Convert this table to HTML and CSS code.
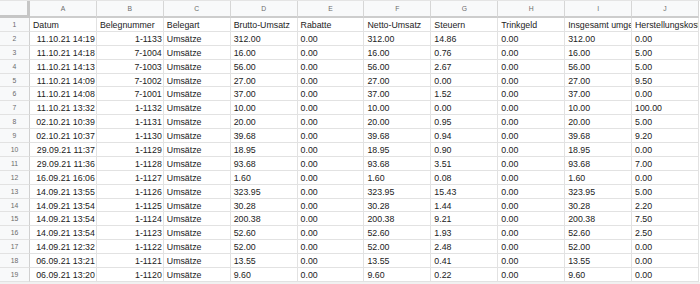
FILE: index.html
```html
<!DOCTYPE html>
<html lang="de">
<head>
    <meta charset="UTF-8">
    <title>Umsätze</title>
    <link rel="stylesheet" href="styles.css">
</head>
<body>
    <div class="sheet">
        <div class="corner"></div>
        <div class="ch">A</div><div class="ch">B</div><div class="ch">C</div><div class="ch">D</div><div class="ch">E</div>
        <div class="ch">F</div><div class="ch">G</div><div class="ch">H</div><div class="ch">I</div><div class="ch">J</div>

        <div class="rh">1</div>
        <div class="c">Datum</div><div class="c">Belegnummer</div><div class="c">Belegart</div><div class="c">Brutto-Umsatz</div><div class="c">Rabatte</div>
        <div class="c">Netto-Umsatz</div><div class="c">Steuern</div><div class="c">Trinkgeld</div><div class="c">Insgesamt umgesetzt</div><div class="c">Herstellungskosten</div>

        <div class="rh">2</div>
        <div class="c r">11.10.21 14:19</div><div class="c r">1-1133</div><div class="c">Umsätze</div><div class="c">312.00</div><div class="c">0.00</div>
        <div class="c">312.00</div><div class="c">14.86</div><div class="c">0.00</div><div class="c">312.00</div><div class="c">0.00</div>

        <div class="rh">3</div>
        <div class="c r">11.10.21 14:18</div><div class="c r">7-1004</div><div class="c">Umsätze</div><div class="c">16.00</div><div class="c">0.00</div>
        <div class="c">16.00</div><div class="c">0.76</div><div class="c">0.00</div><div class="c">16.00</div><div class="c">5.00</div>

        <div class="rh">4</div>
        <div class="c r">11.10.21 14:13</div><div class="c r">7-1003</div><div class="c">Umsätze</div><div class="c">56.00</div><div class="c">0.00</div>
        <div class="c">56.00</div><div class="c">2.67</div><div class="c">0.00</div><div class="c">56.00</div><div class="c">5.00</div>

        <div class="rh">5</div>
        <div class="c r">11.10.21 14:09</div><div class="c r">7-1002</div><div class="c">Umsätze</div><div class="c">27.00</div><div class="c">0.00</div>
        <div class="c">27.00</div><div class="c">0.00</div><div class="c">0.00</div><div class="c">27.00</div><div class="c">9.50</div>

        <div class="rh">6</div>
        <div class="c r">11.10.21 14:08</div><div class="c r">7-1001</div><div class="c">Umsätze</div><div class="c">37.00</div><div class="c">0.00</div>
        <div class="c">37.00</div><div class="c">1.52</div><div class="c">0.00</div><div class="c">37.00</div><div class="c">0.00</div>

        <div class="rh">7</div>
        <div class="c r">11.10.21 13:32</div><div class="c r">1-1132</div><div class="c">Umsätze</div><div class="c">10.00</div><div class="c">0.00</div>
        <div class="c">10.00</div><div class="c">0.00</div><div class="c">0.00</div><div class="c">10.00</div><div class="c">100.00</div>

        <div class="rh">8</div>
        <div class="c r">02.10.21 10:39</div><div class="c r">1-1131</div><div class="c">Umsätze</div><div class="c">20.00</div><div class="c">0.00</div>
        <div class="c">20.00</div><div class="c">0.95</div><div class="c">0.00</div><div class="c">20.00</div><div class="c">5.00</div>

        <div class="rh">9</div>
        <div class="c r">02.10.21 10:37</div><div class="c r">1-1130</div><div class="c">Umsätze</div><div class="c">39.68</div><div class="c">0.00</div>
        <div class="c">39.68</div><div class="c">0.94</div><div class="c">0.00</div><div class="c">39.68</div><div class="c">9.20</div>

        <div class="rh">10</div>
        <div class="c r">29.09.21 11:37</div><div class="c r">1-1129</div><div class="c">Umsätze</div><div class="c">18.95</div><div class="c">0.00</div>
        <div class="c">18.95</div><div class="c">0.90</div><div class="c">0.00</div><div class="c">18.95</div><div class="c">0.00</div>

        <div class="rh">11</div>
        <div class="c r">29.09.21 11:36</div><div class="c r">1-1128</div><div class="c">Umsätze</div><div class="c">93.68</div><div class="c">0.00</div>
        <div class="c">93.68</div><div class="c">3.51</div><div class="c">0.00</div><div class="c">93.68</div><div class="c">7.00</div>

        <div class="rh">12</div>
        <div class="c r">16.09.21 16:06</div><div class="c r">1-1127</div><div class="c">Umsätze</div><div class="c">1.60</div><div class="c">0.00</div>
        <div class="c">1.60</div><div class="c">0.08</div><div class="c">0.00</div><div class="c">1.60</div><div class="c">0.00</div>

        <div class="rh">13</div>
        <div class="c r">14.09.21 13:55</div><div class="c r">1-1126</div><div class="c">Umsätze</div><div class="c">323.95</div><div class="c">0.00</div>
        <div class="c">323.95</div><div class="c">15.43</div><div class="c">0.00</div><div class="c">323.95</div><div class="c">5.00</div>

        <div class="rh">14</div>
        <div class="c r">14.09.21 13:54</div><div class="c r">1-1125</div><div class="c">Umsätze</div><div class="c">30.28</div><div class="c">0.00</div>
        <div class="c">30.28</div><div class="c">1.44</div><div class="c">0.00</div><div class="c">30.28</div><div class="c">2.20</div>

        <div class="rh">15</div>
        <div class="c r">14.09.21 13:54</div><div class="c r">1-1124</div><div class="c">Umsätze</div><div class="c">200.38</div><div class="c">0.00</div>
        <div class="c">200.38</div><div class="c">9.21</div><div class="c">0.00</div><div class="c">200.38</div><div class="c">7.50</div>

        <div class="rh">16</div>
        <div class="c r">14.09.21 13:54</div><div class="c r">1-1123</div><div class="c">Umsätze</div><div class="c">52.60</div><div class="c">0.00</div>
        <div class="c">52.60</div><div class="c">1.93</div><div class="c">0.00</div><div class="c">52.60</div><div class="c">2.50</div>

        <div class="rh">17</div>
        <div class="c r">14.09.21 12:32</div><div class="c r">1-1122</div><div class="c">Umsätze</div><div class="c">52.00</div><div class="c">0.00</div>
        <div class="c">52.00</div><div class="c">2.48</div><div class="c">0.00</div><div class="c">52.00</div><div class="c">0.00</div>

        <div class="rh">18</div>
        <div class="c r">06.09.21 13:21</div><div class="c r">1-1121</div><div class="c">Umsätze</div><div class="c">13.55</div><div class="c">0.00</div>
        <div class="c">13.55</div><div class="c">0.41</div><div class="c">0.00</div><div class="c">13.55</div><div class="c">0.00</div>

        <div class="rh">19</div>
        <div class="c r">06.09.21 13:20</div><div class="c r">1-1120</div><div class="c">Umsätze</div><div class="c">9.60</div><div class="c">0.00</div>
        <div class="c">9.60</div><div class="c">0.22</div><div class="c">0.00</div><div class="c">9.60</div><div class="c">0.00</div>
    </div>
</body>
</html>
```

FILE: styles.css
```css
body {
    margin: 0;
    background-color: #f1f1f1;
    font-family: 'Liberation Sans', Arial, sans-serif;
    overflow: hidden;
}

.sheet {
    display: grid;
    grid-template-columns: 30px repeat(10, 66.9px);
    grid-template-rows: 17px;
    grid-auto-rows: 13.9px;
    background-color: #fff;
    border-top: 1px solid #e4e4e4;
    width: 700px;
}

.sheet > div {
    box-sizing: border-box;
    white-space: nowrap;
    overflow: hidden;
}

.corner {
    background-color: #f8f9fa;
    border-right: 3px solid #c6c6c6;
    border-bottom: 3px solid #c6c6c6;
}

.ch {
    background-color: #f8f9fa;
    color: #6b6b6b;
    font-size: 6.8px;
    text-align: center;
    line-height: 15px;
    border-right: 1px solid #d6d6d6;
    border-bottom: 2px solid #cdcdcd;
}

.rh {
    background-color: #f8f9fa;
    color: #6b6b6b;
    font-size: 6.8px;
    text-align: center;
    line-height: 14px;
    border-right: 1px solid #d0d0d0;
    border-bottom: 1px solid #e2e2e2;
}

.c {
    font-size: 8.8px;
    color: #222;
    line-height: 14px;
    padding: 0 2px 0 3px;
    border-right: 1px solid #e2e2e2;
    border-bottom: 1px solid #e2e2e2;
}

.c.r {
    text-align: right;
    padding: 0 1px 0 2px;
}
```
